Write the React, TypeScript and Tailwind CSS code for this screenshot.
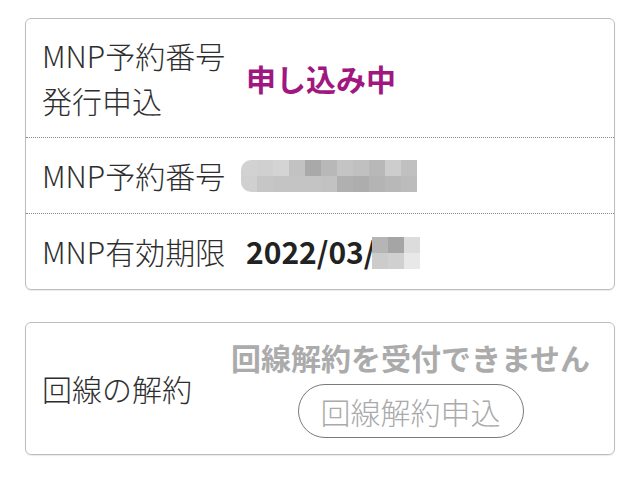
import React from 'react';

const font = { fontFamily: '"Noto Sans CJK JP", "Noto Sans", sans-serif' };

// mosaic used to hide personal data in the screenshot
const Mosaic: React.FC<{ rows: string[][]; className?: string }> = ({ rows, className }) => (
  <div className={`flex flex-col ${className ?? ''}`}>
    {rows.map((row, i) => (
      <div key={i} className="flex">
        {row.map((c, j) => (
          <div key={j} className="h-[16px] w-[16px]" style={{ backgroundColor: c }} />
        ))}
      </div>
    ))}
  </div>
);

const numberMosaic = [
  ['#d2d2d2', '#d0d0d0', '#d4d4d4', '#c2c2c2', '#a9a9a9', '#b8b8b8', '#c4c4c4', '#c0c0c0', '#b8b8b8', '#cdcdcd', '#c0c0c0'],
  ['#d0d0d0', '#c6c6c6', '#c4c4c4', '#c4c4c4', '#c4c4c4', '#c2c2c2', '#b0b0b0', '#adadad', '#b4b4b4', '#b8b8b8', '#bcbcbc'],
];

const dateMosaic = [
  ['#b5b5b5', '#a5a5a5', '#dcdcdc'],
  ['#cccccc', '#d0d0d0', '#e8e8e8'],
];

const App: React.FC = () => {
  return (
    <div className="min-h-[479px] w-[640px] bg-white pt-[18px] text-[30px] font-light text-[#2e2e2e]" style={font}>
      {/* MNP card */}
      <div className="mx-[25px] rounded-[6px] border border-[#bdbdbd] shadow-[0_1px_1px_rgba(0,0,0,0.08)]">
        <div className="flex items-center border-b border-dotted border-[#888] py-[14px] pl-[16px]">
          <div className="w-[204px] leading-[45px]">
            MNP予約番号
            <br />
            発行申込
          </div>
          <div className="leading-[45px] font-bold text-[#a0177f]">申し込み中</div>
        </div>
        <div className="flex items-center border-b border-dotted border-[#888] py-[15px] pl-[16px]">
          <div className="w-[199px] leading-[45px]">MNP予約番号</div>
          <div className="overflow-hidden rounded-l-[10px]">
            <Mosaic rows={numberMosaic} />
          </div>
        </div>
        <div className="flex items-center py-[15px] pl-[16px]">
          <div className="w-[204px] leading-[45px]">MNP有効期限</div>
          <div className="leading-[45px] font-bold text-[#222]">2022/03/</div>
          <Mosaic rows={dateMosaic} className="-ml-[3px] mt-[3px]" />
        </div>
      </div>

      {/* cancellation card */}
      <div className="mx-[25px] mt-[32px] flex items-center rounded-[6px] border border-[#bdbdbd] pl-[16px] pr-[13px] shadow-[0_1px_1px_rgba(0,0,0,0.08)]">
        <div className="w-[178px] leading-[45px]">回線の解約</div>
        <div className="flex flex-1 flex-col items-center pt-[14px] pb-[16px]">
          <div className="leading-[40px] font-bold text-[#ababab]">回線解約を受付できません</div>
          <button className="mt-[7px] h-[54px] rounded-full border-[1.5px] border-[#7a7a7a] px-[22px] text-[30px] leading-[40px] font-light text-[#aaaaaa]">
            回線解約申込
          </button>
        </div>
      </div>
    </div>
  );
};

export default App;
